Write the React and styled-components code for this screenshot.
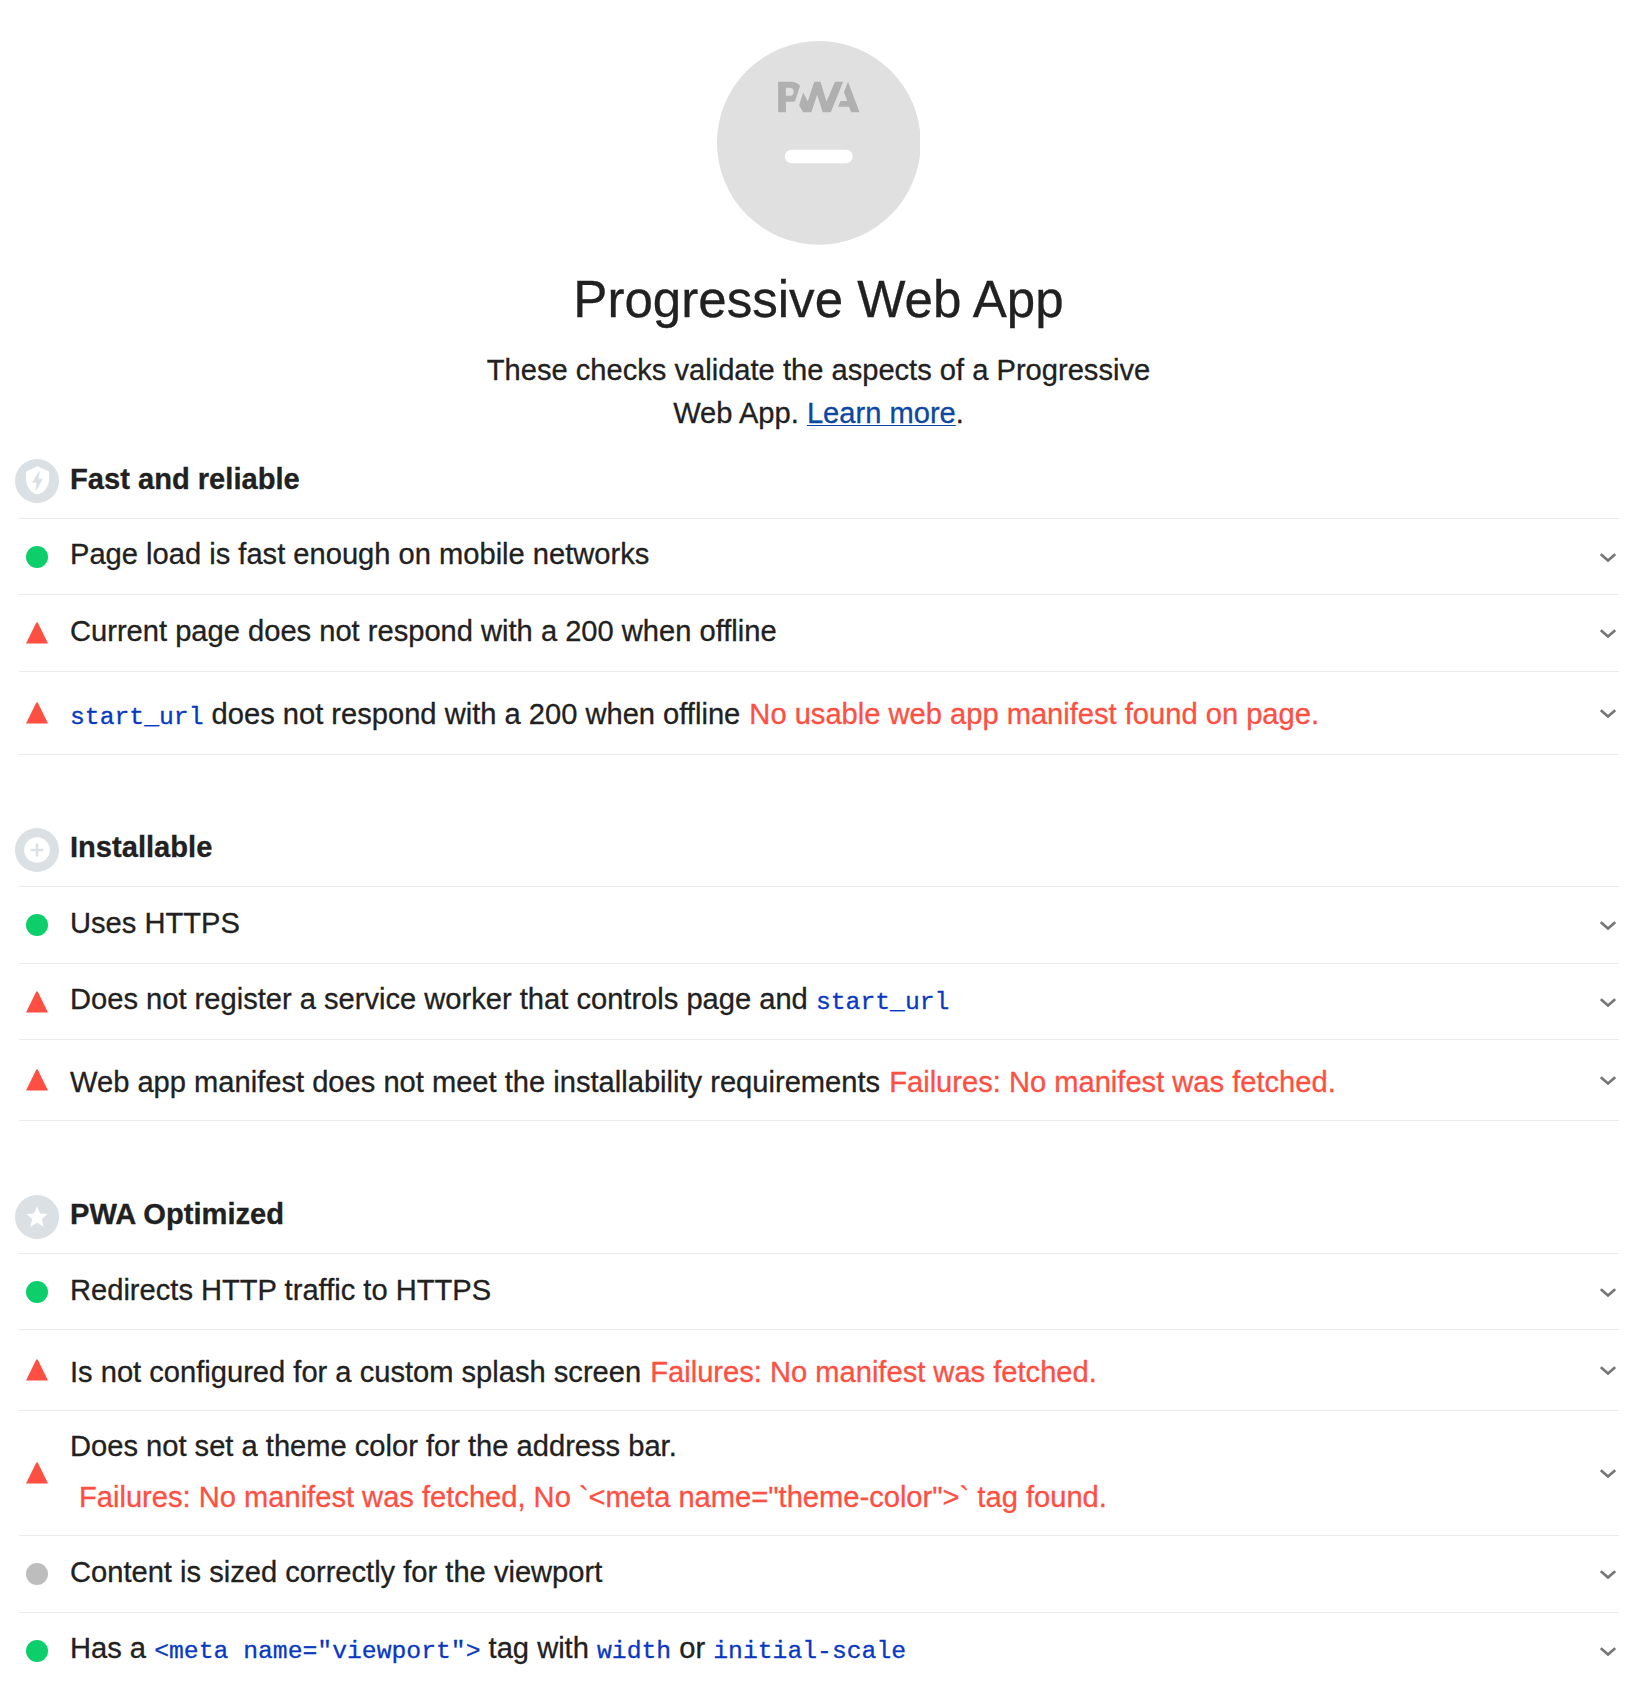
import React from "react";
import styled, { createGlobalStyle } from "styled-components";

const GlobalStyle = createGlobalStyle`
  html, body { margin: 0; padding: 0; background: #fff; }
  body { overflow: hidden; }
`;

const Page = styled.main`
  box-sizing: border-box;
  width: 1650px;
  height: 1684px;
  overflow: hidden;
  padding: 41px 31px 0 19px;
  background: #fff;
  color: #212121;
  font-family: "Liberation Sans", Arial, sans-serif;
  font-size: 29.11px;
  line-height: 44px;
  -webkit-text-stroke: 0.3px currentColor;
`;

const Header = styled.header`
  display: flex;
  flex-direction: column;
  align-items: center;
  height: 418px;
  margin-right: 1px;
`;

const Gauge = styled.svg`
  width: 203.7px;
  height: 203.7px;
  flex: none;
`;

const Title = styled.h1`
  margin: 25px 0 0;
  font-size: 51.1px;
  font-weight: 400;
  line-height: 60px;
  white-space: nowrap;
`;

const Description = styled.p`
  margin: 19px 0 0;
  width: 690px;
  line-height: 43px;
  text-align: center;
`;

const Link = styled.a`
  color: #0c47a1;
  text-decoration: underline;
  text-decoration-thickness: 1px;
  text-underline-offset: 2px;
`;

const Group = styled.section`
  margin-bottom: ${(p) => p.$gap || 0}px;
`;

const GroupHeader = styled.div`
  display: flex;
  align-items: center;
  height: 44px;
  margin: 0 0 ${(p) => p.$space}px -4px;
`;

const GroupIcon = styled.svg`
  width: 44px;
  height: 44px;
  flex: none;
`;

const GroupTitle = styled.h2`
  margin: 0 0 0 11px;
  padding-bottom: ${(p) => p.$lift}px;
  font-size: inherit;
  font-weight: 700;
`;

const Row = styled.div`
  box-sizing: border-box;
  display: flex;
  align-items: center;
  height: ${(p) => p.$height}px;
  border-top: 1px solid #ebebeb;
  &:last-child { border-bottom: 1px solid #ebebeb; }
`;

const Mark = styled.svg`
  width: 22px;
  height: 22px;
  margin: 0 22px 0 7px;
  flex: none;
`;

const RowText = styled.div`
  flex: 1;
  padding-top: ${(p) => p.$drop || 0}px;
  padding-bottom: ${(p) => p.$lift || 0}px;
  white-space: nowrap;
`;

const Failure = styled.span`
  color: #ff4e42;
  margin-left: ${(p) => (p.$block ? 9 : 1)}px;
  ${(p) => p.$block && "display: block; margin-top: 7px;"}
`;

const Code = styled.code`
  color: #0938c2;
  font-family: "Liberation Mono", "Courier New", monospace;
  font-size: 24.72px;
  line-height: 1;
`;

const Chevron = styled.svg`
  width: 16px;
  height: 10px;
  margin: 2px 3px 0 0;
  flex: none;
`;

const marks = {
  pass: <circle cx="11" cy="11" r="11" fill="#0cce6b" />,
  fail: <path d="M10.3 .5h1.4L22 21.5H0z" fill="#ff4e42" />,
  na: <circle cx="11" cy="11" r="11" fill="#bdbdbd" />,
};

function Audit({ status, height, lift, drop, children }) {
  return (
    <Row $height={height}>
      <Mark viewBox="0 0 22 22">{marks[status]}</Mark>
      <RowText $lift={lift} $drop={drop}>{children}</RowText>
      <Chevron viewBox="0 0 16 10">
        <path d="M.8 1.1L8 7.5l7.2-6.4" fill="none" stroke="#757575" strokeWidth="2.6" />
      </Chevron>
    </Row>
  );
}

const groupIcons = {
  fast: "M12.3 4l6.3 2.8V11c0 3.88-2.69 7.52-6.3 8.4C8.69 18.52 6 14.89 6 11V6.8L12.3 4zm-.56 12.88l3.3-5.79.04-.08c.05-.1.01-.29-.26-.29h-1.96l.56-3.92h-.56L9.6 12.52c0 .03.07-.12-.03.07-.11.2-.12.37.2.37h1.97l-.56 3.92h.56z",
  install: "M12 5a7 7 0 1 0 0 14 7 7 0 0 0 0-14zm3.5 7.7h-2.8v2.8h-1.4v-2.8H8.5v-1.4h2.8V8.5h1.4v2.8h2.8v1.4z",
  optimized: "M12 15.07l3.6 2.18-.95-4.1 3.18-2.76-4.2-.36L12 6.17l-1.64 3.86-4.2.36 3.2 2.76-.96 4.1z",
};

function AuditGroup({ icon, title, space, gap, lift, children }) {
  return (
    <Group $gap={gap}>
      <GroupHeader $space={space}>
        <GroupIcon viewBox="0 0 24 24">
          <circle cx="12" cy="12" r="12" fill="#dae0e3" />
          <path d={groupIcons[icon]} fill="#fff" />
        </GroupIcon>
        <GroupTitle $lift={lift}>{title}</GroupTitle>
      </GroupHeader>
      <div>{children}</div>
    </Group>
  );
}

export default function App() {
  return (
    <Page>
      <GlobalStyle />
      <Header>
        <Gauge viewBox="0 0 60 60">
          <circle cx="30" cy="30" r="30" fill="#e0e0e0" />
          <g fill="#b0b0b0">
            <path d="M35.66 19.39l.7-1.75h2L37.4 15 38.6 12l3.4 9h-2.51l-.58-1.61z" />
            <path d="M33.52 21l3.65-9h-2.42l-2.5 5.82L30.5 12h-1.86l-1.9 5.82-1.35-2.65-1.21 3.72L25.4 21h2.38l1.72-5.2 1.64 5.2z" />
            <path d="M20.3 17.91h1.48c.45 0 .85-.05 1.2-.15l.39-1.18 1.07-3.3a2.64 2.64 0 00-.28-.37c-.55-.6-1.36-.91-2.42-.91H18v9h2.3V17.9zm1.96-3.84c.22.22.33.5.33.87 0 .36-.1.65-.29.87-.2.23-.59.35-1.15.35h-.86v-2.41h.87c.52 0 .89.1 1.1.32z" />
          </g>
          <rect x="20" y="32" width="20" height="4" rx="2" fill="#fff" />
        </Gauge>
        <Title>Progressive Web App</Title>
        <Description>
          These checks validate the aspects of a Progressive Web App. <Link>Learn more</Link>.
        </Description>
      </Header>

      <AuditGroup icon="fast" title="Fast and reliable" space={15} gap={73} lift={4}>
        <Audit status="pass" height={76} lift={6}>Page load is fast enough on mobile networks</Audit>
        <Audit status="fail" height={77} lift={4}>Current page does not respond with a 200 when offline</Audit>
        <Audit status="fail" height={84} drop={2}>
          <Code>start_url</Code> does not respond with a 200 when offline{" "}
          <Failure>No usable web app manifest found on page.</Failure>
        </Audit>
      </AuditGroup>

      <AuditGroup icon="install" title="Installable" space={14} gap={74} lift={6}>
        <Audit status="pass" height={77} lift={4}>Uses HTTPS</Audit>
        <Audit status="fail" height={76} lift={6}>
          Does not register a service worker that controls page and <Code>start_url</Code>
        </Audit>
        <Audit status="fail" height={82} drop={4}>
          Web app manifest does not meet the installability requirements{" "}
          <Failure>Failures: No manifest was fetched.</Failure>
        </Audit>
      </AuditGroup>

      <AuditGroup icon="optimized" title="PWA Optimized" space={14} lift={6}>
        <Audit status="pass" height={76} lift={4}>Redirects HTTP traffic to HTTPS</Audit>
        <Audit status="fail" height={81} drop={4}>
          Is not configured for a custom splash screen{" "}
          <Failure>Failures: No manifest was fetched.</Failure>
        </Audit>
        <Audit status="fail" height={125} lift={4}>
          Does not set a theme color for the address bar.
          <Failure $block>{'Failures: No manifest was fetched, No `<meta name="theme-color">` tag found.'}</Failure>
        </Audit>
        <Audit status="na" height={77} lift={4}>Content is sized correctly for the viewport</Audit>
        <Audit status="pass" height={77} lift={6}>
          Has a <Code>{'<meta name="viewport">'}</Code> tag with <Code>width</Code> or <Code>initial-scale</Code>
        </Audit>
      </AuditGroup>
    </Page>
  );
}
